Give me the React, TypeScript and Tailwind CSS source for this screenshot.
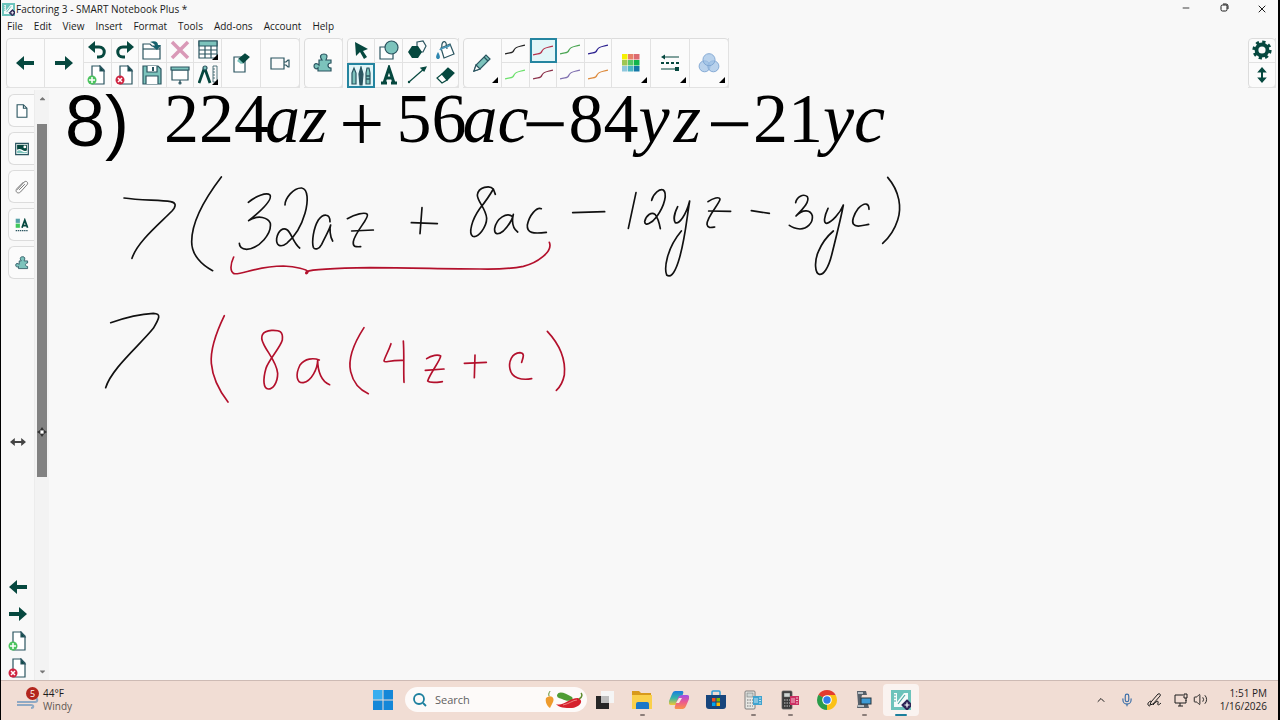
import type { ReactNode } from "react";
import { FaCaretDown, FaCaretUp } from "react-icons/fa";
import { ChevronUp, Mic, Minus, Volume2, X } from "lucide-react";

const DARK = "#06483f";
const TEAL = "#7cc3bc";
const LINE = "#2b5560";

const menus = ["File", "Edit", "View", "Insert", "Format", "Tools", "Add-ons", "Account", "Help"];

const Svg = ({ size = 20, children }: { size?: number; children: ReactNode }) => (
  <svg width={size} height={size} viewBox="0 0 20 20" fill="none" stroke={LINE} strokeWidth="1.2" aria-hidden="true">
    {children}
  </svg>
);

const ArrowLeft = () => (
  <Svg>
    <path d="M1 10 L9 3 V8 H19 V12 H9 V17 Z" fill={DARK} stroke="none" />
  </Svg>
);

const ArrowRight = () => (
  <Svg>
    <path d="M19 10 L11 3 V8 H1 V12 H11 V17 Z" fill={DARK} stroke="none" />
  </Svg>
);

const Undo = () => (
  <Svg>
    <path d="M6 7 H12 C19 7 19 17 12 17 H10" stroke={DARK} strokeWidth="3" />
    <path d="M1 7 L8 1 V13 Z" fill={DARK} stroke="none" />
  </Svg>
);

const Redo = () => (
  <Svg>
    <path d="M14 7 H8 C1 7 1 17 8 17 H10" stroke={DARK} strokeWidth="3" />
    <path d="M19 7 L12 1 V13 Z" fill={DARK} stroke="none" />
  </Svg>
);

const Page = () => (
  <>
    <path d="M5 1 H13 L17 5 V19 H5 Z" fill="#fff" />
    <path d="M13 1 L17 6 H13 Z" fill={DARK} />
  </>
);

const PageAdd = () => (
  <Svg>
    <Page />
    <circle cx="5" cy="15" r="4.500" fill="#4cc35f" stroke="none" />
    <path d="M5 12 V18 M2 15 H8" stroke="#fff" strokeWidth="1.500" />
  </Svg>
);

const PageDelete = () => (
  <Svg>
    <Page />
    <circle cx="5" cy="15" r="4.500" fill="#cf2440" stroke="none" />
    <path d="M3 13 L7 17 M7 13 L3 17" stroke="#fff" strokeWidth="1.500" />
  </Svg>
);

const Open = () => (
  <Svg>
    <path d="M1 19 V4 H8 L10 6 H18 V19 Z" fill="#fff" />
    <path d="M1 9 H18" />
    <path d="M8 2 C13 0 16 2 16 5 H19 L15 10 L10 6 H13 C13 4 11 3 8 2 Z" fill="#14606c" stroke="none" />
  </Svg>
);

const Delete = () => (
  <Svg>
    <path d="M2 2 L18 18 M18 2 L2 18" stroke="#d999b7" strokeWidth="3.500" />
  </Svg>
);

const Save = () => (
  <Svg>
    <path d="M1 1 H16 L19 4 V19 H1 Z" fill={TEAL} />
    <path d="M5 1 V7 H15 V1 M4 19 V11 H16 V19" fill="#fff" />
    <path d="M11 2 V6" strokeWidth="2" />
  </Svg>
);

const Screen = () => (
  <Svg>
    <path d="M2 5 H18 V15 H2 Z M10 15 V18" fill="#fff" />
    <path d="M1 2 H19 V5 H1 Z" fill={TEAL} />
    <circle cx="10" cy="18" r="1" />
  </Svg>
);

const Corner = () => <path d="M20 14 V20 H14 Z" fill="#000" stroke="none" />;

const Table = () => (
  <Svg>
    <path d="M1 1 H19 V18 H1 Z" fill="#fff" />
    <path d="M1 1 H19 V6 H1 Z" fill={TEAL} />
    <path d="M1 10 H19 M1 14 H19 M7 6 V18 M13 6 V18" />
    <Corner />
  </Svg>
);

const Measure = () => (
  <Svg>
    <path d="M6 4 L1 18 M7 4 L12 18" stroke={DARK} strokeWidth="2.800" />
    <circle cx="7" cy="3" r="2" fill={TEAL} />
    <path d="M15 1 H19 V17 H15 Z M15 4 H17 M15 7 H17 M15 10 H17 M15 13 H17" strokeWidth="0.800" />
    <Corner />
  </Svg>
);

const PageErase = () => (
  <Svg>
    <path d="M3 4 H14 V19 H3 Z" fill="#fff" />
    <path d="M8 6 L14 1 L18 4 L12 10 Z" fill={DARK} stroke={DARK} />
    <path d="M8 6 L12 10 L10 11 L6 8 Z" fill={TEAL} stroke="none" />
  </Svg>
);

const Camera = () => (
  <Svg>
    <path d="M1 5 H14 V16 H1 Z M14 9 H16 L18 7 H19 V14 H18 L16 12 H14" />
  </Svg>
);

const Puzzle = ({ size = 20 }: { size?: number }) => (
  <Svg size={size}>
    <path
      d="M6 7 H9 C6 3 8 1 11 1 C14 1 15 3 13 7 H18 V10 C14 10 14 15 18 15 V18 H5 V15 C3 17 1 15 1 13 C1 10 4 10 6 12 Z"
      fill={TEAL}
    />
  </Svg>
);

const Cursor = () => (
  <Svg>
    <path d="M4 2 L17 9 L12 11 L16 17 L13 19 L9 12 L5 16 Z" fill={DARK} stroke="none" />
  </Svg>
);

const Shapes = () => (
  <Svg>
    <path d="M1 7 H14 V19 H1 Z" fill="#fff" />
    <circle cx="12.500" cy="7.500" r="6.500" fill={TEAL} />
  </Svg>
);

const Polygons = () => (
  <Svg>
    <path d="M10 2 L16 1 L19 6 L16 12 L10 12 Z" />
    <path d="M5 6 H11 L15 12 L11 18 H5 L1 12 Z" fill={DARK} stroke="none" />
  </Svg>
);

const Fill = () => (
  <Svg>
    <path d="M6 8 L15 4 L19 14 L9 18 Z" fill="#fff" />
    <path d="M7 9 C6 2 9 0 11 3 L12 9" />
    <path d="M5 10 C7 7 11 8 15 5" stroke="#4a97b8" strokeWidth="2" />
    <path d="M3 12 C0 17 1 19 3 19 C5 19 6 17 3 12 Z" fill="#2f87b0" stroke="none" />
  </Svg>
);

const Pens = () => (
  <Svg>
    <path d="M1 7 L3 2 L5 7 V18 H1 Z M15 7 L16 2 H18 L19 7 V18 H15 Z" fill={TEAL} />
    <path d="M8 8 L10 1 L12 8 L11 19 H9 Z" fill={LINE} />
    <path d="M15 10 H19 M15 13 H19" strokeWidth="1.500" />
  </Svg>
);

const TextTool = () => (
  <Svg>
    <path d="M2 18 H8 M12 18 H18 M5 18 L10 3 L15 18 M7 13 H13" stroke={DARK} strokeWidth="3" />
  </Svg>
);

const LineTool = () => (
  <Svg>
    <path d="M2 17 L18 3" stroke={DARK} />
    <path d="M19 2 L17 6 L14 3 Z" fill={DARK} stroke={DARK} />
    <circle cx="2" cy="17" r="1.200" fill={DARK} stroke="none" />
  </Svg>
);

const Eraser = () => (
  <Svg>
    <path d="M7 9 L13 3 L19 8 L12 15 Z" fill={DARK} stroke={DARK} />
    <path d="M7 9 L2 13 L7 18 L12 15 Z" fill="#fff" stroke={DARK} />
  </Svg>
);

const Pencil = () => (
  <Svg>
    <path d="M2 18 L4 12 L14 2 L18 6 L8 16 Z" fill={TEAL} />
    <path d="M4 12 L8 16 L2 18 Z" fill="#fff" />
    <path d="M12 4 L16 8" />
  </Svg>
);

const Palette = () => {
  const colors = ["#f6f000", "#e88068", "#dd6a70", "#9fc653", "#55c767", "#10b44c", "#8fc7dd", "#4cb6c4", "#1478a8"];
  return (
    <Svg>
      {colors.map((color, i) => (
        <rect key={color} x={1 + (i % 3) * 6} y={1 + Math.floor(i / 3) * 6} width="5.500" height="5.500" fill={color} stroke="none" />
      ))}
    </Svg>
  );
};

const LineStyle = () => (
  <Svg>
    <path d="M3 4 H19 M1 16 H16" stroke={DARK} />
    <path d="M1 10 H19" stroke={DARK} strokeWidth="1.800" strokeDasharray="3 2" />
    <path d="M1 4 L5 1.500 V6.500 Z M15 14 H19 V18 H15 Z" fill={DARK} stroke="none" />
  </Svg>
);

const Transparency = () => (
  <Svg size={22}>
    <g fill="#9cc0e6" fillOpacity="0.700" stroke="#7ba3d0" strokeWidth="0.800">
      <circle cx="6" cy="13" r="5" />
      <circle cx="14" cy="13" r="5" />
      <circle cx="10" cy="7" r="5.500" />
    </g>
  </Svg>
);

const Gear = () => (
  <Svg>
    <circle cx="10" cy="10" r="5.500" stroke={DARK} strokeWidth="3.800" />
    <circle cx="10" cy="10" r="8" stroke={DARK} strokeWidth="3.200" strokeDasharray="3.140" />
  </Svg>
);

const UpDown = () => (
  <Svg size={16}>
    <path d="M10 4 V16" stroke={DARK} strokeWidth="2.500" />
    <path d="M10 0 L16 7 H4 Z M10 20 L16 13 H4 Z" fill={DARK} stroke="none" />
  </Svg>
);

const Squiggle = ({ color }: { color: string }) => (
  <Svg>
    <path d="M0 14 C5 12 8 14 9 10 C11 6 14 7 20 5" stroke={color} strokeWidth="1.200" />
  </Svg>
);

const AppLogo = ({ size = 20 }: { size?: number }) => (
  <Svg size={size}>
    <rect x="0" y="0" width="20" height="20" fill="#6cc3bb" stroke="none" />
    <path d="M3 3 H6 V12 L13 3 H17 V10 L11 17 H3 Z" fill="#f4fbfa" stroke="none" />
    <path d="M3 5 H5 M3 8 H5 M3 11 H5 M7 14 L14 5" stroke="#4ba79f" />
    <path d="M16 10 L21 15 L16 20 L11 15 Z" fill="#2d2555" stroke="#2d2555" />
    <path d="M16 12.500 V17.500 M13.500 15 H18.500" stroke="#fff" />
  </Svg>
);

const PicturePane = () => (
  <Svg size={14}>
    <path d="M1 2 H19 V18 H1 Z" fill="#fff" strokeWidth="1.800" />
    <path d="M3 4 H17 V12 C12 15 9 7 3 11 Z" fill={DARK} stroke="none" />
    <path d="M3 13 C8 9 11 17 17 14 V16 H3 Z" fill={TEAL} stroke="none" />
    <circle cx="14" cy="7" r="2" fill="#fff" stroke="none" />
  </Svg>
);

const Clip = () => (
  <Svg size={14}>
    <path d="M3 14 L13 3 C16 0 20 4 17 7 L8 17 C4 21 -1 16 3 12 L12 3 M6 14 L14 6" strokeWidth="1.400" stroke="#777" />
  </Svg>
);

const Properties = () => (
  <Svg size={14}>
    <path d="M1 1 H7 V7 H1 Z" fill="#57a0a8" stroke="none" />
    <path d="M1 8 H7 V14 H1 Z" fill="#3fc75b" stroke="none" />
    <path d="M10 14 L14 3 L18 14 M11 11 H17" stroke={DARK} strokeWidth="2.500" />
    <path d="M1 18 H19" strokeWidth="2" strokeDasharray="2 1" />
  </Svg>
);

type ToolProps = {
  label: string;
  children: ReactNode;
  active?: boolean;
  menu?: boolean;
};

const Tool = ({ label, children, active, menu }: ToolProps) => (
  <button
    aria-label={label}
    className={
      active
        ? "relative flex h-full w-full items-center justify-center border-2 border-[#2585a0] bg-[#e2f6f8]"
        : "relative flex h-full w-full items-center justify-center border-r border-b border-[#e2e2e2]"
    }
  >
    {children}
    {menu && (
      <svg className="absolute right-[3px] bottom-1" width="6" height="6" aria-hidden="true">
        <path d="M6 0 V6 H0 Z" />
      </svg>
    )}
  </button>
);

const Group = ({ children }: { children: ReactNode }) => (
  <div className="flex h-[50px] rounded-sm bg-[#fbfbfb] outline -outline-offset-1 outline-[#dcdcdc]">{children}</div>
);

const Wide = ({ children }: { children: ReactNode }) => <div className="h-full w-[39px]">{children}</div>;

const Toolbar = () => (
  <div className="flex items-start gap-1 pt-1 pr-[2px] pl-[5px]">
    <Group>
      <Wide><Tool label="Previous page"><ArrowLeft /></Tool></Wide>
      <Wide><Tool label="Next page"><ArrowRight /></Tool></Wide>
      <div className="grid w-[138px] grid-cols-5 grid-rows-2">
        <Tool label="Undo"><Undo /></Tool>
        <Tool label="Redo"><Redo /></Tool>
        <Tool label="Open"><Open /></Tool>
        <Tool label="Delete"><Delete /></Tool>
        <Tool label="Table"><Table /></Tool>
        <Tool label="Add page"><PageAdd /></Tool>
        <Tool label="Delete page"><PageDelete /></Tool>
        <Tool label="Save"><Save /></Tool>
        <Tool label="Screen shade"><Screen /></Tool>
        <Tool label="Measurement tools"><Measure /></Tool>
      </div>
      <Wide><Tool label="Clear page"><PageErase /></Tool></Wide>
      <Wide><Tool label="Record"><Camera /></Tool></Wide>
    </Group>
    <Group>
      <Wide><Tool label="Add-ons"><Puzzle /></Tool></Wide>
    </Group>
    <Group>
      <div className="grid w-[112px] grid-cols-4 grid-rows-2">
        <Tool label="Select"><Cursor /></Tool>
        <Tool label="Shapes"><Shapes /></Tool>
        <Tool label="Regular polygons"><Polygons /></Tool>
        <Tool label="Fill"><Fill /></Tool>
        <Tool label="Pens" active><Pens /></Tool>
        <Tool label="Text"><TextTool /></Tool>
        <Tool label="Line"><LineTool /></Tool>
        <Tool label="Eraser"><Eraser /></Tool>
      </div>
    </Group>
    <Group>
      <Wide><Tool label="Pen type" menu><Pencil /></Tool></Wide>
      <div className="grid w-[110px] grid-cols-4 grid-rows-2">
        <Tool label="Black pen"><Squiggle color="#222222" /></Tool>
        <Tool label="Red pen" active><Squiggle color="#b5304a" /></Tool>
        <Tool label="Green pen"><Squiggle color="#4aa552" /></Tool>
        <Tool label="Blue pen"><Squiggle color="#2a1f8f" /></Tool>
        <Tool label="Light green pen"><Squiggle color="#6be06b" /></Tool>
        <Tool label="Maroon pen"><Squiggle color="#8a2f48" /></Tool>
        <Tool label="Violet pen"><Squiggle color="#8070b0" /></Tool>
        <Tool label="Orange pen"><Squiggle color="#dd8a3c" /></Tool>
      </div>
      <Wide><Tool label="Color" menu><Palette /></Tool></Wide>
      <Wide><Tool label="Line style" menu><LineStyle /></Tool></Wide>
      <Wide><Tool label="Transparency" menu><Transparency /></Tool></Wide>
    </Group>
    <div className="ml-auto">
      <Group>
        <div className="grid w-7 grid-rows-2">
          <Tool label="Customize toolbar"><Gear /></Tool>
          <Tool label="Move toolbar"><UpDown /></Tool>
        </div>
      </Group>
    </div>
  </div>
);

const SideTab = ({ label, children }: { label: string; children: ReactNode }) => (
  <button
    aria-label={label}
    className="flex h-[33px] w-[26px] items-center justify-center rounded-l-md border border-r-0 border-[#dcdcdc] bg-[#fbfbfb]"
  >
    {children}
  </button>
);

const Sidebar = () => (
  <aside className="flex w-[33px] flex-col items-end pt-1">
    <div className="flex flex-col gap-[5px]">
      <SideTab label="Page sorter">
        <Svg size={14}>
          <path d="M3 1 H12 L17 6 V19 H3 Z M12 1 V6 H17" fill="#fff" strokeWidth="1.600" />
        </Svg>
      </SideTab>
      <SideTab label="Gallery"><PicturePane /></SideTab>
      <SideTab label="Attachments"><Clip /></SideTab>
      <SideTab label="Properties"><Properties /></SideTab>
      <SideTab label="Add-ons"><Puzzle size={14} /></SideTab>
    </div>
    <div className="flex w-full flex-1 flex-col items-center pl-px">
      <button aria-label="Resize sidebar" className="mt-auto mb-[127px]">
        <Svg size={16}>
          <path d="M4 10 H16" stroke="#444" strokeWidth="2.500" />
          <path d="M0 10 L6 5 V15 Z M20 10 L14 5 V15 Z" fill="#444" stroke="none" />
        </Svg>
      </button>
      <div className="flex flex-col gap-[7px] pb-[2px]">
        <button aria-label="Back"><ArrowLeft /></button>
        <button aria-label="Forward"><ArrowRight /></button>
        <button aria-label="New page"><PageAdd /></button>
        <button aria-label="Remove page"><PageDelete /></button>
      </div>
    </div>
  </aside>
);

const ScrollBar = () => (
  <div className="flex w-[15px] flex-col items-center border-l border-[#ececec] bg-[#f3f3f3] py-1 text-[#777]">
    <FaCaretUp size={9} />
    <div className="flex w-full flex-1 flex-col px-[2px] pt-[21px]">
      <div className="flex h-[65%] items-end justify-center bg-[#828282] pb-10">
        <svg width="10" height="10" viewBox="0 0 10 10" fill="#333" aria-hidden="true">
          <path d="M5 0 L7 3 H3 Z M5 10 L7 7 H3 Z M0 5 L3 3 V7 Z M10 5 L7 3 V7 Z" />
          <circle cx="5" cy="5" r="1.500" fill="#fff" />
        </svg>
      </div>
    </div>
    <FaCaretDown size={9} />
  </div>
);

// pen strokes, three units to the pixel
const blackInk = [
  "M222 339 C270 346 330 345 362 350 C378 353 380 362 366 378 C330 415 262 470 246 520",
  "M514 276 C465 340 425 410 425 470 C425 510 455 540 488 557",
  "M595 352 C615 335 650 320 660 330 C668 345 630 380 596 407 C625 388 655 398 661 415 C665 445 630 490 590 493 C575 492 568 485 568 475",
  "M705 360 C705 340 730 308 755 309 C775 312 775 350 765 385 C755 420 735 455 710 475 C690 490 678 480 680 460 C685 435 700 427 712 435 C725 445 730 475 749 489",
  "M840 410 C840 385 820 385 805 405 C790 430 785 470 790 487 C795 496 808 492 815 478 C828 450 838 435 842 420 C838 430 840 455 848 468",
  "M892 401 C915 388 945 380 952 388 C958 400 915 440 910 470 C908 485 915 486 932 485",
  "M905 438 L970 435",
  "M1084 413 L1162 416",
  "M1116 368 L1110 446",
  "M1336 328 L1330 312 C1320 300 1285 305 1282 330 C1282 350 1308 370 1310 400 C1310 425 1285 460 1268 454 C1255 445 1265 405 1290 370 C1310 345 1320 330 1330 312",
  "M1388 395 C1370 380 1340 400 1334 430 C1332 450 1345 450 1360 438 C1378 420 1388 400 1390 388 C1385 410 1388 430 1403 441",
  "M1474 371 C1460 365 1438 390 1432 420 C1430 445 1450 447 1489 442",
  "M1568 383 L1664 380",
  "M1758 323 L1735 430",
  "M1805 346 C1810 325 1830 310 1840 315 C1852 325 1845 360 1820 395 C1805 415 1785 425 1784 410 C1788 390 1805 380 1815 388 C1825 400 1828 415 1831 431",
  "M1883 365 C1873 385 1870 405 1876 413 C1888 418 1908 390 1919 348 C1910 400 1905 470 1885 530 C1872 570 1860 578 1850 570 C1842 550 1850 490 1894 438",
  "M1974 350 C1990 338 2008 335 2010 342 C2010 355 1970 395 1971 418 C1973 430 1982 428 1994 426",
  "M1976 378 L2042 379",
  "M2104 377 L2158 385",
  "M2237 353 C2240 335 2260 325 2272 335 C2280 350 2260 370 2238 393 C2260 370 2282 375 2287 392 C2290 415 2270 432 2250 432 C2235 430 2225 426 2218 421",
  "M2334 370 C2322 395 2320 415 2330 415 C2345 412 2370 385 2380 360 C2375 390 2360 450 2345 510 C2335 550 2320 570 2308 568 C2295 565 2292 530 2305 500 C2315 475 2330 455 2350 438",
  "M2457 373 C2457 355 2445 350 2425 370 C2410 390 2405 410 2410 417 C2418 428 2435 422 2456 418",
  "M2513 277 C2550 320 2555 370 2543 405 C2532 440 2515 460 2498 475",
  "M182 713 C225 698 270 687 310 685 C335 686 328 700 310 730 C270 780 185 850 167 908",
];

const redInk = [
  "M551 516 C540 540 540 560 552 566 C575 570 620 543 700 543 C740 545 770 553 774 560 C770 570 764 565 770 560 C785 553 830 550 960 548 C1100 549 1200 552 1290 552 C1340 553 1390 550 1420 544 C1460 535 1510 500 1498 472",
  "M523 692 C490 760 482 810 484 835 C488 880 510 920 534 951",
  "M697 765 C700 740 690 735 665 736 C635 738 630 755 640 775 C650 800 680 830 683 865 C683 895 668 912 655 912 C640 910 638 885 648 850 C655 825 690 790 697 765",
  "M808 825 C790 818 765 820 750 840 C735 870 740 895 760 893 C785 888 803 850 803 825 C803 860 815 890 839 899",
  "M942 728 C905 785 895 830 902 860 C910 895 930 915 955 926",
  "M1023 776 C1015 800 1005 815 1002 828 C1005 835 1015 825 1058 826",
  "M1060 768 C1063 810 1060 850 1062 892",
  "M1130 821 C1145 810 1165 808 1172 813 C1172 825 1140 865 1133 888 C1140 895 1160 892 1177 890",
  "M1126 856 L1182 852",
  "M1243 835 L1309 832",
  "M1275 810 L1273 878",
  "M1415 832 C1420 815 1425 805 1410 803 C1385 805 1375 830 1380 852 C1385 880 1415 886 1445 881",
  "M1492 739 C1535 785 1547 830 1543 870 C1538 895 1528 908 1519 916",
];

const PlusSign = () => <span className="mx-3 self-start text-[80px] leading-[68px]">+</span>;

const MinusSign = () => <span className="mr-px -ml-[6px] self-start text-[80px] leading-[68px]">−</span>;

const Board = () => (
  <main className="relative flex-1 text-black">
    <p className="absolute top-0 left-4 font-['Liberation_Sans',Arial,sans-serif] text-[72px] leading-[62px]">8)</p>
    <h1 className="absolute top-0 left-[115px] flex items-baseline font-['Liberation_Serif',serif] text-[70px] leading-[58px] whitespace-nowrap">
      <span>224<i className="-ml-1">az</i></span>
      <PlusSign />
      <span>56<i className="-ml-1">ac</i></span>
      <MinusSign />
      <span className="mr-3">84<i>y</i><i className="ml-1">z</i></span>
      <MinusSign />
      <span>21<i>yc</i></span>
    </h1>
    <svg
      className="absolute top-0 left-0"
      width="880"
      height="330"
      viewBox="-3 15 2640 990"
      fill="none"
      strokeWidth="5"
      strokeLinecap="round"
      strokeLinejoin="round"
      role="img"
      aria-label="Handwritten working"
    >
      <g stroke="#111">{blackInk.map((d) => <path key={d} d={d} />)}</g>
      <g stroke="#b3102c">{redInk.map((d) => <path key={d} d={d} />)}</g>
    </svg>
  </main>
);

const WindowsLogo = () => (
  <svg width="20" height="20" viewBox="0 0 20 20" fill="#1487d8" aria-hidden="true">
    <path d="M0 0 H9.500 V9.500 H0 Z" fill="#38aef0" />
    <path d="M10.500 0 H20 V9.500 H10.500 Z M0 10.500 H9.500 V20 H0 Z M10.500 10.500 H20 V20 H10.500 Z" />
  </svg>
);

const Peppers = () => (
  <svg width="38" height="20" viewBox="0 0 38 20" fill="none" aria-hidden="true">
    <path d="M1 8 C6 4 10 8 8 12 L5 18 C2 16 0 12 1 8 Z" fill="#ee9b2d" />
    <path d="M4 6 C3 3 5 2 5 1" stroke="#5d8c2c" />
    <path d="M12 5 C14 0 20 3 27 7 C30 11 22 12 17 9 C13 8 12 7 12 5 Z" fill="#4f9c34" />
    <path d="M11 14 C18 17 24 8 33 8 C39 10 36 17 27 18 C20 18 14 18 11 14 Z" fill="#d5202c" />
    <path d="M34 9 C38 7 37 4 36 3" stroke="#5d8c2c" strokeWidth="1.500" />
    <path d="M18 15 C24 14 28 10 32 10" stroke="#f08080" />
  </svg>
);

const TaskView = () => (
  <svg width="20" height="20" viewBox="0 0 20 20" aria-hidden="true">
    <rect x="1" y="6" width="13" height="13" fill="#262626" />
    <rect x="6" y="1" width="13" height="12" fill="#f5f5f5" />
    <rect x="6" y="6" width="8" height="7" fill="#bdbdbd" />
  </svg>
);

const Explorer = () => (
  <svg width="20" height="20" viewBox="0 0 20 20" aria-hidden="true">
    <path d="M0 1 H7 L9 3 H19 V9 H0 Z" fill="#d89a1c" />
    <path d="M0 5 H20 V19 H0 Z" fill="#fad04b" />
    <path d="M4 19 V14 Q4 12 6 12 H15 Q17 12 17 14 V19 Z" fill="#1b78c8" />
  </svg>
);

const Copilot = () => (
  <svg width="20" height="20" viewBox="0 0 20 20" aria-hidden="true">
    <defs>
      <linearGradient id="cool" x1="0" y1="0" x2="0" y2="1">
        <stop offset="0" stopColor="#1a7be0" />
        <stop offset="0.500" stopColor="#35b4a8" />
        <stop offset="1" stopColor="#f3c833" />
      </linearGradient>
      <linearGradient id="warm" x1="0" y1="0" x2="0" y2="1">
        <stop offset="0" stopColor="#a050e8" />
        <stop offset="0.500" stopColor="#ec5a8e" />
        <stop offset="1" stopColor="#fb9348" />
      </linearGradient>
    </defs>
    <path d="M6 1 H13 Q15 1 14 4 L11 12 Q10 15 7 15 H2 Q-1 15 0 11 L3 4 Q4 1 6 1 Z" fill="url(#cool)" />
    <path d="M14 5 H18 Q21 5 20 9 L17 16 Q16 19 14 19 H7 Q5 19 6 16 L9 8 Q10 5 14 5 Z" fill="url(#warm)" />
    <path d="M10 8 H13 L10 13 H7 Z" fill="#f8e9e6" />
  </svg>
);

const Store = () => (
  <svg width="20" height="20" viewBox="0 0 20 20" aria-hidden="true">
    <path d="M6 5 V2 Q6 1 7 1 H13 Q14 1 14 2 V5" fill="none" stroke="#2f9ed8" strokeWidth="1.500" />
    <path d="M0 5 H20 V16 Q20 19 17 19 H3 Q0 19 0 16 Z" fill="#17457c" />
    <rect x="6" y="8" width="3.500" height="3.500" fill="#f25022" />
    <rect x="10.500" y="8" width="3.500" height="3.500" fill="#7fba00" />
    <rect x="6" y="12.500" width="3.500" height="3.500" fill="#00a4ef" />
    <rect x="10.500" y="12.500" width="3.500" height="3.500" fill="#ffb900" />
  </svg>
);

const Calculator = ({ body, tag }: { body: string; tag: string }) => (
  <svg width="20" height="20" viewBox="0 0 20 20" aria-hidden="true">
    <rect x="2" y="1" width="10" height="18" rx="1" fill={body} stroke="#666" strokeWidth="0.800" />
    <rect x="4" y="3" width="6" height="4" fill="#cfd6d4" stroke="#666" strokeWidth="0.500" />
    <path d="M4 10 H10 M4 13 H10 M4 16 H10" stroke="#999" strokeWidth="1.500" strokeDasharray="1.500 1" />
    <rect x="10" y="6" width="9" height="9" fill={tag} />
    <path d="M12 8 V13 M14 8 V13 M16 8 H18 M16 10.500 H18 M16 13 H18" stroke="#fff" strokeWidth="0.700" />
  </svg>
);

const Chrome = () => (
  <svg width="20" height="20" viewBox="0 0 20 20" aria-hidden="true">
    <path d="M10 10 L1.340 5 A10 10 0 0 1 18.660 5 Z" fill="#e33b2e" />
    <path d="M10 10 L18.660 5 A10 10 0 0 1 10 20 Z" fill="#fbc116" />
    <path d="M10 10 L10 20 A10 10 0 0 1 1.340 5 Z" fill="#2a9c4a" />
    <path d="M10 5 H18.660 L14.300 12.500 Z" fill="#fbc116" />
    <path d="M1.340 5 L5.700 12.500 L10 10 Z" fill="#2a9c4a" />
    <circle cx="10" cy="10" r="4.800" fill="#fff" />
    <circle cx="10" cy="10" r="3.700" fill="#2f7de9" />
  </svg>
);

const DocCamera = () => (
  <svg width="20" height="20" viewBox="0 0 20 20" aria-hidden="true">
    <path d="M3 1 H12 L13 5 H8 L7 9 L8 14 H14 L15 18 H3 L4 14 Z" fill="#56606a" />
    <path d="M4 2 H9 V4 H4 Z M4 15 H10 V17 H4 Z" fill="#b6bec4" />
    <rect x="7" y="8" width="10" height="6" fill="#3d9bd6" stroke="#27343d" />
  </svg>
);

type TaskIconProps = { label: string; children: ReactNode; running?: boolean; active?: boolean };

const TaskIcon = ({ label, children, running, active }: TaskIconProps) => (
  <button
    aria-label={label}
    className={
      active
        ? "relative flex h-8 w-9 items-center justify-center rounded bg-[#faf3f0]"
        : "relative flex h-8 w-9 items-center justify-center"
    }
  >
    {children}
    {running && <span className="absolute bottom-0 h-[2px] w-[5px] rounded-full bg-[#8b7d79]" />}
    {active && <span className="absolute bottom-0 h-[2px] w-3 rounded-full bg-[#1b7f9c]" />}
  </button>
);

const Taskbar = () => (
  <footer className="flex h-10 items-center border-t border-[#cdbab4] bg-[#f1ddd4] pb-[2px] pl-[5px] text-[10px] leading-[13px]">
    <div className="flex flex-1 items-center gap-1 pl-[11px]">
      <div className="relative">
        <svg width="22" height="24" viewBox="0 0 22 24" fill="none" stroke="#8fa9c4" strokeWidth="2" aria-hidden="true">
          <path d="M0 14 H18 C21 14 21 10 18 10 M0 17 H14 C17 17 17 20 14 20" />
        </svg>
        <span className="absolute -top-px right-0 flex size-[13px] items-center justify-center rounded-full bg-[#b3261e] text-[9px] text-white">5</span>
      </div>
      <div>
        <p className="text-[#1c1c1c]">44°F</p>
        <p className="text-[#5e5653]">Windy</p>
      </div>
    </div>
    <div className="flex items-center">
      <TaskIcon label="Start"><WindowsLogo /></TaskIcon>
      <div className="ml-1 flex h-[25px] w-[182px] items-center gap-2 rounded-full bg-[#fdfaf9] pr-1 pl-2">
        <svg width="14" height="14" viewBox="0 0 14 14" fill="none" stroke="#1d809f" strokeWidth="1.800" aria-hidden="true">
          <circle cx="6" cy="6" r="5" />
          <path d="M10 10 L13 13" />
        </svg>
        <input
          aria-label="Search"
          placeholder="Search"
          className="w-0 flex-1 bg-transparent text-[11px] outline-none placeholder:text-[#5f5f5f]"
        />
        <Peppers />
      </div>
      <div className="flex gap-px">
        <TaskIcon label="Task view"><TaskView /></TaskIcon>
        <TaskIcon label="File Explorer" running><Explorer /></TaskIcon>
        <TaskIcon label="Copilot"><Copilot /></TaskIcon>
        <TaskIcon label="Microsoft Store"><Store /></TaskIcon>
        <TaskIcon label="Graphing calculator" running><Calculator body="#e8e8e4" tag="#3fa3cf" /></TaskIcon>
        <TaskIcon label="Multiview calculator" running><Calculator body="#3a3a3a" tag="#cc2f62" /></TaskIcon>
        <TaskIcon label="Chrome"><Chrome /></TaskIcon>
        <TaskIcon label="Document camera" running><DocCamera /></TaskIcon>
        <TaskIcon label="SMART Notebook" active><AppLogo /></TaskIcon>
      </div>
    </div>
    <div className="flex flex-1 items-center justify-end pr-[11px] text-[#1c1c1c]">
      <button aria-label="Hidden icons" className="mr-[13px]"><ChevronUp size={12} /></button>
      <button aria-label="Microphone" className="mr-[13px] text-[#3a6ea8]"><Mic size={14} strokeWidth={2} /></button>
      <button aria-label="Pen menu" className="mr-3">
        <svg width="15" height="14" viewBox="0 0 15 14" fill="none" stroke="currentColor" aria-hidden="true">
          <path d="M4 9 L11 1 C13 0 14 2 13 3 L6 11 L3 12 Z M4 8 C0 9 0 13 3 13 M6 12 C9 8 12 7 11 10 C10 13 12 12 14 10" />
        </svg>
      </button>
      <button aria-label="Network" className="mr-[5px]">
        <svg width="14" height="14" viewBox="0 0 14 14" fill="none" stroke="currentColor" aria-hidden="true">
          <path d="M9 2 H1 V10 H12 V7 M4 13 H9 M6 10 V13 M10 1 H13 V5 H10 Z M12 5 V8" />
        </svg>
      </button>
      <button aria-label="Volume" className="mr-3"><Volume2 size={15} strokeWidth={1.5} /></button>
      <div className="text-right">
        <p>1:51 PM</p>
        <p>1/16/2026</p>
      </div>
    </div>
  </footer>
);

export default function App() {
  return (
    <div className="flex min-h-screen flex-col border-r-2 border-l border-black bg-[#f8f8f8] font-['Open_Sans',sans-serif] text-[#1a1a1a]">
      <header className="flex h-[18px] items-center pl-px text-[10px]">
        <AppLogo size={13} />
        <span className="ml-px">Factoring 3 - SMART Notebook Plus *</span>
        <div className="ml-auto flex gap-[6px]">
          <button aria-label="Minimize" className="flex w-8 justify-center"><Minus size={10} strokeWidth={2} /></button>
          <button aria-label="Restore" className="flex w-8 justify-center">
            <svg width="9" height="9" viewBox="0 0 9 9" fill="none" stroke="currentColor" aria-hidden="true">
              <rect x="1" y="2" width="6" height="6" rx="1.500" />
              <path d="M3 1 H6 Q8 1 8 3 V6" />
            </svg>
          </button>
          <button aria-label="Close" className="flex w-8 justify-center"><X size={12} strokeWidth={2} /></button>
        </div>
      </header>
      <nav className="flex h-4 items-center gap-[11px] pl-[6px] text-[10px]">
        {menus.map((menu) => (
          <button key={menu}>{menu}</button>
        ))}
      </nav>
      <Toolbar />
      <div className="flex flex-1 pt-[2px]">
        <Sidebar />
        <ScrollBar />
        <Board />
      </div>
      <Taskbar />
    </div>
  );
}
